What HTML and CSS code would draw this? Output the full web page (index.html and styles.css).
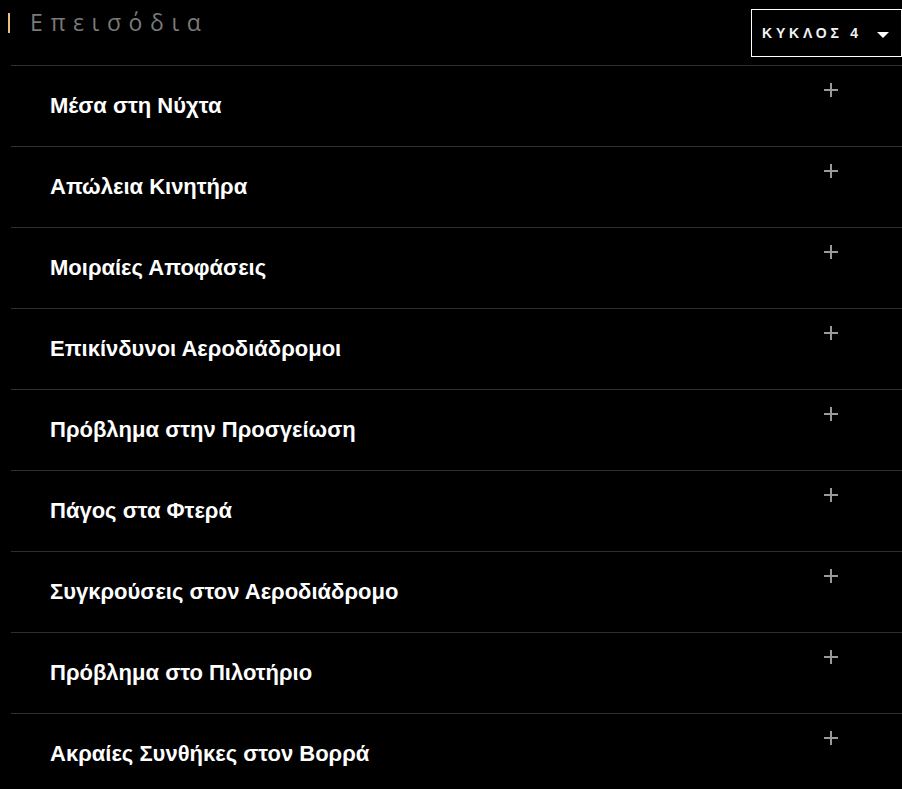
FILE: index.html
```html
<!DOCTYPE html>
<html lang="el">
<head>
    <meta charset="UTF-8">
    <meta name="viewport" content="width=device-width, initial-scale=1.0">
    <title>Επεισόδια</title>
    <link rel="stylesheet" href="styles.css">
</head>
<body>
    <div class="episodes">
        <!-- Header -->
        <div class="episodes-header">
            <h2 class="episodes-title">Επεισόδια</h2>
            <button class="season-select">
                <span>ΚΥΚΛΟΣ 4</span>
                <span class="caret"></span>
            </button>
        </div>

        <!-- Episode list -->
        <ul class="episode-list">
            <li class="episode"><span class="episode-name">Μέσα στη Νύχτα</span><span class="plus"></span></li>
            <li class="episode"><span class="episode-name">Απώλεια Κινητήρα</span><span class="plus"></span></li>
            <li class="episode"><span class="episode-name">Μοιραίες Αποφάσεις</span><span class="plus"></span></li>
            <li class="episode"><span class="episode-name">Επικίνδυνοι Αεροδιάδρομοι</span><span class="plus"></span></li>
            <li class="episode"><span class="episode-name">Πρόβλημα στην Προσγείωση</span><span class="plus"></span></li>
            <li class="episode"><span class="episode-name">Πάγος στα Φτερά</span><span class="plus"></span></li>
            <li class="episode"><span class="episode-name">Συγκρούσεις στον Αεροδιάδρομο</span><span class="plus"></span></li>
            <li class="episode"><span class="episode-name">Πρόβλημα στο Πιλοτήριο</span><span class="plus"></span></li>
            <li class="episode"><span class="episode-name">Ακραίες Συνθήκες στον Βορρά</span><span class="plus"></span></li>
        </ul>
    </div>
</body>
</html>
```

FILE: styles.css
```css
:root {
    --accent-color: #e5c27c;
    --line-color: #2e2e2e;
    --muted-color: #7a7a7a;
}

body {
    margin: 0;
    background-color: #000;
    color: #fff;
    font-family: 'Liberation Sans', Arial, sans-serif;
    overflow: hidden;
}

.episodes {
    padding-left: 11px;
}

.episodes-header {
    display: flex;
    justify-content: space-between;
    align-items: flex-start;
    height: 65px;
    border-bottom: 1px solid var(--line-color);
}

.episodes-title {
    position: relative;
    margin: 8px 0 0 0;
    padding-left: 19px;
    font-family: 'Open Sans', sans-serif;
    font-weight: 400;
    font-size: 23px;
    line-height: 28px;
    letter-spacing: 7.6px;
    color: var(--muted-color);
}

.episodes-title::before {
    content: "";
    position: absolute;
    left: -3px;
    top: 5px;
    width: 2px;
    height: 20px;
    background: var(--accent-color);
}

.season-select {
    display: flex;
    align-items: center;
    justify-content: space-between;
    margin-top: 9px;
    width: 151px;
    height: 48px;
    padding: 0 12px 0 10px;
    background: #000;
    border: 1px solid #fff;
    color: #f2f2f2;
    font-family: 'Liberation Sans', Arial, sans-serif;
    font-weight: bold;
    font-size: 14px;
    letter-spacing: 3.8px;
}

.caret {
    width: 0;
    height: 0;
    border-left: 6px solid transparent;
    border-right: 6px solid transparent;
    border-top: 6px solid #fff;
    margin-top: 3px;
}

.episode-list {
    list-style: none;
    margin: 0;
    padding: 0;
}

.episode {
    position: relative;
    display: flex;
    align-items: center;
    height: 80px;
    padding-left: 39px;
    border-bottom: 1px solid var(--line-color);
}

.episode-name {
    font-weight: bold;
    font-size: 22px;
    margin-top: -1px;
}

.plus {
    position: absolute;
    left: 813px;
    top: 17px;
    width: 14px;
    height: 14px;
}

.plus::before,
.plus::after {
    content: "";
    position: absolute;
    background: #9a9a9a;
}

.plus::before {
    left: 0;
    top: 6px;
    width: 14px;
    height: 2px;
}

.plus::after {
    left: 6px;
    top: 0;
    width: 2px;
    height: 14px;
}
```
